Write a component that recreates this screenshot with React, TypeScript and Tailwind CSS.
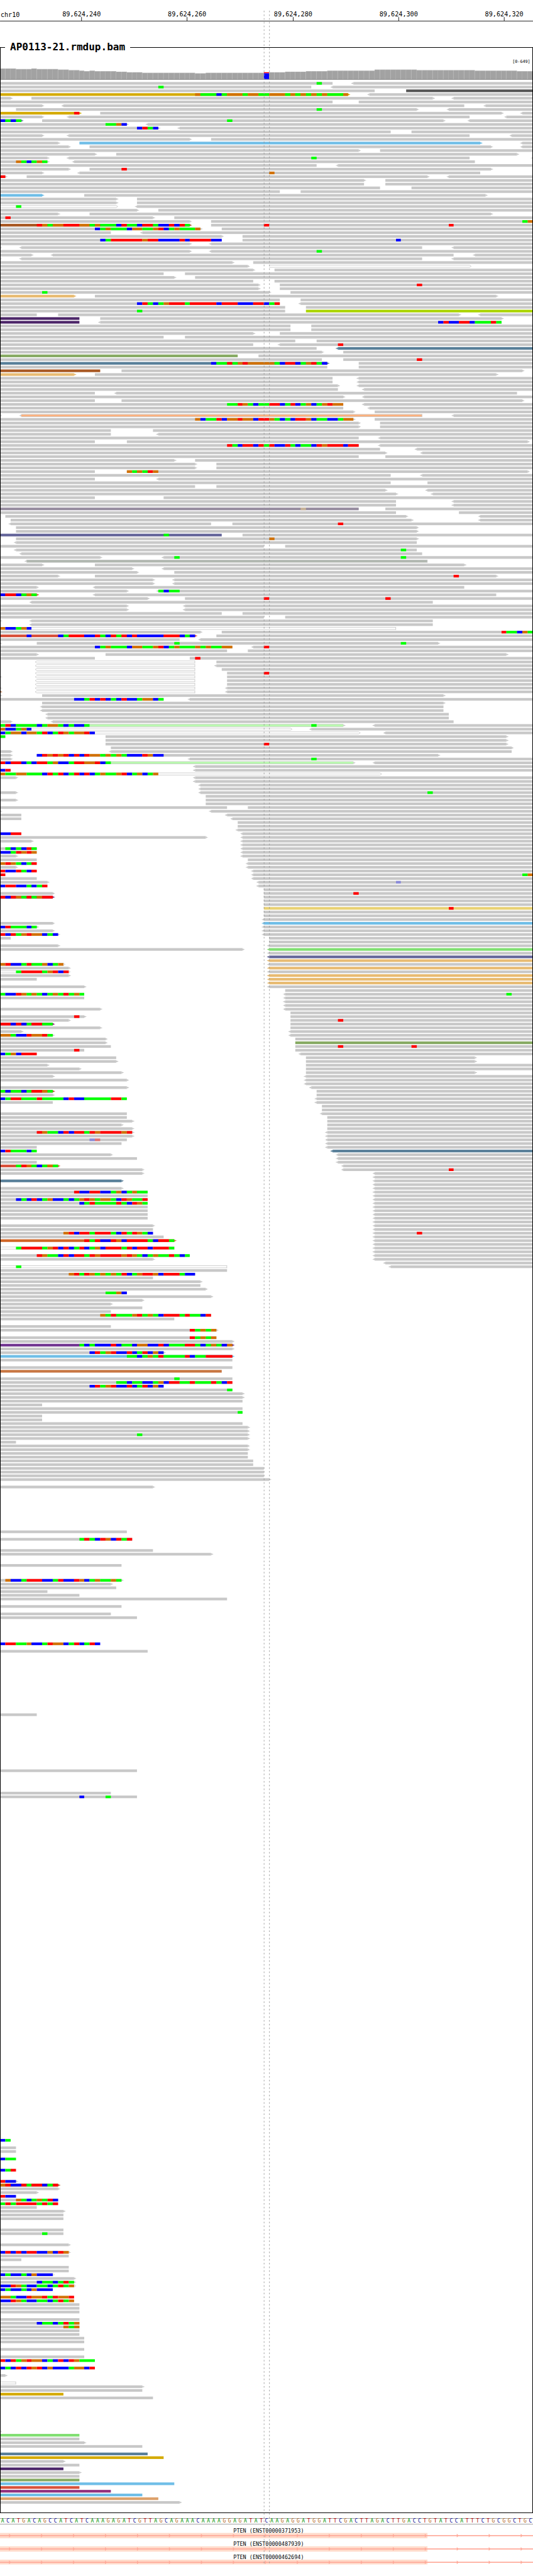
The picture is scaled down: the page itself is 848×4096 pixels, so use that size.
import React from "react";

const BASES = 101;
const WIDTH = 1000;
const ROW = 7;

/* Left edge of a base column, in chart units. */
const edge = (k: number) => Math.round((k * WIDTH) / BASES);

const READ_COLORS: Record<string, string> = {
  "": "#c8c8c8",
  y: "#d4aa00",
  k: "#555555",
  s: "#6fbee7",
  v: "#4b2568",
  l: "#aad400",
  t: "#587f99",
  o: "#87aa63",
  b: "#a85823",
  p: "#e8bb72",
  M: "#978da0",
  V: "#64659a",
  R: "#d8503a",
  Y: "#e9d172",
  G: "#80df71",
  O: "#d16526",
  U: "#733792",
  B: "#c87642",
  m: "#93307d",
  T: "#dda16b",
};

/* Reads drawn with a thin grey outline round a pale fill. */
const OUTLINED: Record<string, string> = {
  w: "#ffffff",
  P: "#ffb07a",
  g: "#adb5ac",
  L: "#b8ffac",
};

const BASE_COLORS: Record<string, string> = {
  A: "#00ff00",
  C: "#0000ff",
  G: "#d17105",
  T: "#ff0000",
  n: "#c8b49a",
  c: "#8b8bd9",
  t: "#e07474",
};

/*
 * One line for each row of the pile-up.
 *   [colour][<]start-end[>]   a read, with its direction
 *   position:bases            mismatches and soft clips
 *   =n                        continue at row n
 */
const PILEUP = `0-63 60:A <67-101
0-59 30:A <63-101
0-71 k77-101
y0-66> 37:GAAACAGGGAGGAAGGGAGAGAGAGAAAG <70-101
0-2> 6-82> <86-101
0-63 68-101
0-8> <12-88 <92-101
3-79> 60:A <85-101
y0-15> 14:T 19-95> <99-101
0-8> <13-89 <96-101
t0-4> 0:CACA 8-84> 43:A <89-101
0-24> 20:AAGC <28-101
0-30> 26:CTAC <34-101
0-74 78-101
0-8> <13-89 <97-101
0-36> 40-101
0-11> s15-91> <99-101
0-13> 17-93> <99-101
0-68> 72-101
0-18> 22-98>
0-9> <13-89 59:A <101-101
0-9> 3:GACAGA <14-90
0-60 <64-101
0-13> 17-93> 23:T
0-8> <15-91 51:G
0-1> 0:T 5-81> <85-101
0-69> 73-101
0-69 73-101
0-72 78-101
0-53 57-101
s0-8> 16-92>
0-22> 26-101
0-22> 26-101
w0-22> 3:A <26-101
0-26> 30-101
0-11> 17-93>
0-29> 1:T 33-101
0-36> 40-101 99:AG
b0-36> 7:TGAGGTTTGGAGAAACTAACTTACCTCTA 40-101 50:T 85:T
0-38> 18:CAGAAACGGAAGTCAGAAAG 42-101
0-21 <27-101
0-42> 46-101
0-42 19:CATTTTTTGTTCCCCTCTTTTCC 46-101 75:C
0-36> <40-101
w0-0> <4-80 <86-101
0-36> <40-101 60:A
0-6> <10-86 <90-101
w0-0> <4-80 <86-101
0-44> 48-101
0-47> w51-89>
0-48> 52-101
0-31 35-101
0-33> 37-101
0-48 52-101
0-49> 53-101 79:T
0-49> 53-101
0-51> 8:A 55-101
p0-14> 18-94>
0-53 57-101
0-53 26:CTACAGTTTATTTTTCTTTCCCTTCAT <57-101
0-54 58-101
0-54 26:A l58-101
0-7 11-87> <91-101
v0-15 19-95>
v0-15 <19-95 83:CTCCTTCAAATA
0-55 59-101
0-55 59-101
0-48> 53-101
0-31 35-101
0-56 60-101
0-48 <53-101 64:T
0-60 t<64-101
0-61> 65-101
o0-45 49-101
0-61 65-101 79:T
t0-62> 40:CAATAGTGGGGGACTTCAGTAC 68-101
0-62 68-101
b0-19 23-99>
p0-14> 18-94>
0-63 <68-101
0-63 <68-101
0-64> <68-101
0-64 <69-101
0-18 <22-98
0-65> <69-101
0-18 23-99>
0-65 43:AATGACAATTCATCAGCAGTGG <69-101
0-65 <70-101
0-67> 71-101
w0-0> P<4-80 <86-101
0-67> 37:GCAATCGGTGGCTTGACACTTGCAACCAGG 71-101
0-68> 72-101
0-68> 72-101
0-21 29-101
0-21 <30-101
0-68 <72-101
0-18 24-100>
0-68 43:TACTTCTATCCTACAACTGTTTCTT <72-101
0-72 <79-101
0-73> <80-101
0-68 73-101
0-33> 37-101
0-37> 41-101
0-37> 41-101
0-18 24-100> 24:GAGATG
0-74 <80-101
0-18 <30-101
0-74 81-101
0-37 41-101
0-73> <81-101
0-75> <82-101
0-18 31-101
0-75 <86-101
0-75 <86-101
M0-68 57:n 73-101
0-75 87-101
1-77> <91-101
2-78> <91-101
<2-40 44-101 64:T
3-79>
3-79>
V0-42 31:A 46-101
3-79> 51:G
<3-79
0-50 54-101
<3-79 76:A
<4-80
0-19> <31-101 33:A 76:A
g<5-81
0-8> 18-88>
0-25> <31-101
0-26> 33-101
0-11> 18-94> 86:T
0-29> <33-101
0-29> <33-101
0-7> <18-88
0-24> <30-101 30:ACAA
R0-7> 0:CTTCAGA <18-94
0-28> 35-101 50:T 73:T
<6-82
0-24> <35-101
0-24> <35-101
0-42 46-101
0-50 54-101
0-0> <6-82
<6-82
w0-75 0:GCCAGC
0-38> 42-101 95:TAACGA
R0-37> 5:C 11:CATTTCCTACTATCTCCCCCTTTCAC 41-101
0-34 <38-101
0-0> 7-83> 33:A 76:A
0-44 18:CAGAAACGGAAGTCAGAAAGAGAAGG <48-101 50:T
0-43 47-101
0-7> 20-96>
0-18 36-101 37:T
w<7-37 41-101
w<7-37 <41-101
w<7-37 42-101
w<7-37 43-101 50:T
0-0> w<7-37 43-101
w<7-37 43-101
w<7-37 43-101
0-0> w<7-37 <43-101
b0-0> w<7-37 <43-101
0-0> 8-84>
0-31 14:CCATCTCACTCCAGGCA <36-101
8-84>
<8-84
<8-84
<9-85
<9-85
0-2> <10-86
L0-65> 0:ATCAAAACAGGACACCA 59:A <71-101
w0-55> 0:GCCAGC <59-101
w0-68> 0:CAGGCGGATCATGAGGTC <73-101
0:A 20-96>
20-96>
20-96> 50:T
21-97>
0-2> <21-97
0-2> 7-83> 7:CTGTGTCTCTGGAGAGACCCTGCC
0-2> <36-101 59:A
L0-67> 0:TCTTCACTTAGCCATTGGTCA <71-101
<37-101
0:CT <37-101
w0-72> 0:GAAGGAAACTATCATCTCAGAAGTCAGCAG
0-3> <37-101
<37-101
<38-101
<38-101
0-3> <38-101 81:A
39-101
0-3> 39-101
39-101
0-43 47-101
0-0> <40-101
0-4 <43-101
0-4 <44-101
45-101
45-101
<45-101
0:CCTT <46-101
0-39> <46-101
0-6> <46-101
<46-101
0-7 1:ACACTA <46-101
0:CCATGTG <46-101
0-3> <46-101
0-7 47-101
0:GTGACAT <47-101
0-3> <47-101
0:TCCTACT <48-101
0:T <48-101 99:AG
0-7 <48-101
0-9> <49-101 75:c
0:CTTCCACAT <49-101
50-101
0-10> 50-101 67:T
m0-10> 0:TCTGATAGTT 50-101
50-101
50-101
Y50-101 85:T
50-101
50-101
<50-101
0-10> s<50-101
0-7> 0:CTAAACA <50-101
0-10> <50-101
0-11> 0:TCTAGTGGCAC <50-101
0-2 51-101
51-101
0-11> <51-101
0-46> G<51-101
<51-101
V<51-101
p<51-101
w0-12> 0:GTCCATAAGCAG <51-101
0-13> p<51-101
w0-13> 3:ATTTTAGTCT <51-101
0-13> p<51-101
0-7 p<51-101
p<51-101
0-16> <51-101
54-101
0-16 0:ACCTGAGACAGATAGA <54-101 96:A
0-16 <54-101
<54-101
<54-101
0-19> <54-101
55-101
0-16> 14:T 55-101
0-13> 55-101 64:T
m0-10> 0:TTCTCATTAA 55-101
0-19> 55-101
0-4> <55-101
0-10> 0:GGACCTGGTA <55-101
0-20> 56-101
0-20> o56-101
0-21 56-101 64:T 78:T
0-16 14:T 56-101
0:CAGCTTT <57-101
0-22 58-90>
0-22> 58-90>
0-9> 58-101
0-15> 58-101
0-23> 58-90>
0-10> <58-101
0-24> <58-101
<58-101
0-24> <59-101
b0-10> 0:ACAACATTGA 60-101
0-10> 60-101
0:CATTAAATAAAACTCCAAAAATTA <60-101
0-10 <60-101
61-101
61-101
0-24 <61-101
0-24 62-101
0-25> 62-101
0-23> 62-101
0-25> 62-101
0-25> 7:TGAACTCTTATGTTTTGT <62-101
0-25> <62-101
0-24 17:ct <62-101
0-23 <62-101
0-7 <62-101
0:CTAAACA t<63-101
0-21> <64-101
0-26 <64-101
0-7 <64-101
R0-11> 3:ATGACAGA <65-101
0-27> <65-101 85:T
0-27> <71-101
<71-101
t0-23> <71-101
<71-101
0-23> <71-101
0-28 14:TCCTTCCAGCAGAA <71-101
0-28 <71-101
0-28 3:CACTCAGCCACAGTGAGGACTGAAT <71-101
0-28 15:CATAAAATACTGA <71-101
0-28 <71-101
0-28 <71-101
0-28 <71-101
0-28 <71-101
<71-101
0-29> <71-101
0-29 <71-101
0-29 12:GTCTTATTTACTATGAC <71-101 79:T
0-31 <71-101
O0-33> 16:TATCCTGCTTTTACTTA <71-101
<71-101
w0-33 3:ATTTTAGTCTCATCAGCTTTATCTTCTTTA <71-101
<71-101
0-36 7:TGAACTCTTATGTTTTGTGACAGAATACA <71-101
0-29> <71-101
<73-101
w0-43 3:A <74-101
0-43
0-37 13:GTATGAGAGATCAGTTGCTTTACC
0-29
0-38>
0-38
0-39>
0-24 20:AAGC
0-40>
0-27>
0-21>
0-27
0-21
0-40 19:GATAAAGTAGACTTTATAACT
0-33
=333
0-21
0-41> 36:TAGAG
=336
0-41 36:TAGAG
0-44>
U0-44> 15:ACACCCTCAACGGCCTCAAATTACAGACG
0-44>
0-31> 17:CTAGTCCTCATCGC
s0-44> 24:AACAGATAAAATCAATTTTT
0-44
=344
0-44
B0-42
=347
0-44 33:A
0-44 22:AACAACCAGCTTAATAAATACT
0-31 17:CTAGTCCTCATCGC
0-44 43:A
0-46>
0-46>
0-46
0-8
0-46
0-46 45:A
0-8
0-8
0-46
0-47>
0-47>
0-47> 26:A
0-47>
0-3
0-47>
0-47>
0-47
0-47
0-48
0-48
0-50
0-50
0-50
0-51>
=376
0-29>
=388
0-24
=390
0-25 15:ATACTGCTAT
=393
0-29
0-40>
=397
0-23
=401
0-23> 1:GCCATTTCCATCCTGCAGAAGA
0-21>
0-22
0-9
0-15
0-43
=408
0-23
=410
0-21
0-26
=418
0:CTTAAGCCATGGCATCATC
=420
0-28
=437
0-7
=452
0-26
=458
0-21
0-26 15:C 20:A
=551
0:CA
=553
0-3
0-3
=556
0:CAA
=559
0:CAT
=562
0-3> 0:TCC
b0-11> 0:GTCCTATTCAT
0-11>
0-7>
0:TCC
0-11 3:GACAGATC
0:ATATTTTATAT
0-7
0-12>
0-12
0-12
=575
0-12
0-12 8:A
=579
0-13>
=581
0-13> 0:CTCTCTTCCGCTG
0-13
0-4
=585
0-13
0-13
w0-10> 0:CACCACGCCC
0-14>
0-14> 7:CAACATA
w0-14> 0:CCTGACCAACATAG
0:CACCACGCCC
=593
0:GGACCTGGTATGGT
0:CCTGACCAACATAG
0-15
0-15
0-15
=599
0-15
0-15 7:CAACATAG
0-15 12:GAG
0-15
0-15
0-16
0-16
=607
0-16
=609
0-16
0:TCTAGTGGCACTCTGAAA
=612
0:CACTCTGTCGCCCAGGCT
=614
0-1>
=616
w0-3
0-27>
0-27
y0-12
0-29
=629
w0-0>
G0-15
0-15
0-16>
0-27
=635
t0-28
y0-31
0-12>
0-15
v0-12
0-15>
0-15
o0-15
s0-33
R0-15
m0-21
s0-27
T0-30
0-34>`;

const SEQUENCE =
  "ACATGACAGCCATCATCAAAGAGATCGTTAGCAGAAACAAAAGGAGATATCAAGAGGATGGATTCGACTTAGACTTGACCTGTATCCATTTCTGCGGCTGC";

const TICKS = [
  { base: 15, label: "89,624,240" },
  { base: 35, label: "89,624,260" },
  { base: 55, label: "89,624,280" },
  { base: 75, label: "89,624,300" },
  { base: 95, label: "89,624,320" },
];

/* [number of bases, column height] */
const COVERAGE: [number, number][] = [
  [3, 20], [3, 19], [1, 20], [4, 19], [2, 18], [2, 17], [1, 16], [1, 15],
  [1, 16], [4, 15], [2, 14], [3, 13], [10, 12], [2, 11], [11, 12], [1, 13],
  [3, 13], [4, 14], [4, 15], [9, 16], [8, 18], [11, 17], [8, 16], [3, 15],
];
const VARIANT_BASE = 50;

const TRANSCRIPTS = [
  "PTEN (ENST00000371953)",
  "PTEN (ENST00000487939)",
  "PTEN (ENST00000462694)",
];

const MONO = "font-['DejaVu_Sans_Mono',monospace]";

function Ruler() {
  return (
    <svg viewBox="0 0 1000 75" className={`block h-auto w-full ${MONO}`} role="img" aria-label="Genome position">
      <text x="1" y="32" fontSize="12">chr10</text>
      {TICKS.map(({ base, label }) => {
        const x = edge(base + 0.5);
        return (
          <g key={label}>
            <text x={x} y="31" fontSize="12" textAnchor="middle">{label}</text>
            <rect x={x - 0.5} y="32" width="1" height="7" />
          </g>
        );
      })}
      <rect x="0" y="39" width="1000" height="1" />
    </svg>
  );
}

function Coverage() {
  const heights = COVERAGE.flatMap(([n, h]) => Array<number>(n).fill(h));
  return (
    <svg viewBox="0 0 1000 49" className={`block h-auto w-full ${MONO}`} role="img" aria-label="Coverage">
      <text x="995" y="17" fontSize="8" textAnchor="end">[0-649]</text>
      {heights.map((h, i) => {
        const x = edge(i);
        const w = edge(i + 1) - x;
        if (i === VARIANT_BASE) {
          return (
            <g key={i}>
              <rect x={x} y={47 - h} width={w} height="2" fill="#ff0000" />
              <rect x={x} y={49 - h} width={w} height={h - 2} fill="#0000ff" />
            </g>
          );
        }
        return (
          <g key={i}>
            <rect x={x} y={47 - h} width={w} height={h} fill="#b0b0b0" />
            <rect x={x} y={48 - h} width={w - 1} height={h - 1} fill="#a2a2a2" />
          </g>
        );
      })}
      <rect x="0" y="47" width="1000" height="1" fill="#707070" />
    </svg>
  );
}

function Read({ spec, y }: { spec: string; y: number }) {
  const m = /^([a-zA-Z]?)(<?)(\d+)-(\d+)(>?)$/.exec(spec);
  if (!m) return null;
  const [, code, left, from, to, right] = m;
  const a = edge(Number(from));
  const b = edge(Number(to));
  const inner = OUTLINED[code];
  const color = inner ? READ_COLORS[""] : READ_COLORS[code];
  const hollow = code === "w";
  const line = { fill: "none", stroke: color, strokeWidth: 1 };
  return (
    <>
      {b > a && <rect x={a} y={y} width={b - a} height="5" fill={inner ?? color} />}
      {inner && b > a && (
        <>
          <path d={`M${a} ${y + 0.5}H${b}M${a} ${y + 4.5}H${b}`} {...line} />
          {!left && a > 0 && code !== "w" && <path d={`M${a + 0.5} ${y}v5`} {...line} />}
          {!right && b < WIDTH && <path d={`M${b - 0.5} ${y}v5`} {...line} />}
        </>
      )}
      {right && !hollow && <path d={`M${b} ${y + 1}h2v1h2v1h-2v1h-2z`} fill={color} />}
      {left && !hollow && <path d={`M${a} ${y + 1}h-2v1h-2v1h2v1h2z`} fill={color} />}
      {right && hollow && <path d={`M${b} ${y + 0.5}l3 2l-3 2`} {...line} />}
      {left && hollow && <path d={`M${a} ${y + 0.5}l-3 2l3 2`} {...line} />}
    </>
  );
}

function Letters({ spec, y }: { spec: string; y: number }) {
  const [pos, letters] = spec.split(":");
  const runs = letters.match(/(.)\1*/g) ?? [];
  let at = Number(pos);
  return (
    <>
      {runs.map((run) => {
        const start = at;
        at += run.length;
        return (
          <rect
            key={start}
            x={edge(start)}
            y={y}
            width={edge(at) - edge(start)}
            height="5"
            fill={BASE_COLORS[run[0]]}
          />
        );
      })}
    </>
  );
}

function parsePileup(text: string) {
  const rows: { row: number; items: string[] }[] = [];
  let row = 0;
  for (const line of text.split("\n")) {
    if (line.startsWith("=")) {
      row = Number(line.slice(1));
    } else {
      rows.push({ row, items: line.split(" ") });
      row += 1;
    }
  }
  return rows;
}

const ROWS = parsePileup(PILEUP);

function Alignments() {
  return (
    <svg viewBox="0 0 1000 4562" className="block h-auto w-full" role="img" aria-label="Aligned reads">
      {ROWS.map(({ row, items }) => {
        const y = 4 + row * ROW;
        return (
          <g key={row}>
            {items.map((item) =>
              item.includes(":") ? (
                <Letters key={item} spec={item} y={y} />
              ) : (
                <Read key={item} spec={item} y={y} />
              ),
            )}
          </g>
        );
      })}
    </svg>
  );
}

const LETTER_CLASS: Record<string, string> = {
  A: "text-[#009000]",
  C: "text-[#000090]",
  G: "text-[#b06010]",
  T: "text-[#a80000]",
};

function ReferenceSequence() {
  return (
    <div className="mt-2 grid grid-cols-[repeat(101,minmax(0,1fr))] border-y border-[#a0a0a0] text-center text-[8px] leading-[8px]">
      {SEQUENCE.split("").map((letter, i) => (
        <span key={i} className={LETTER_CLASS[letter]}>{letter}</span>
      ))}
    </div>
  );
}

function Transcripts() {
  const arrows = Array.from({ length: 17 }, (_, i) => 17 + i * 60);
  return (
    <svg viewBox="0 0 1000 96" className={`block h-auto w-full ${MONO}`} role="img" aria-label="Transcripts">
      {TRANSCRIPTS.map((name, i) => {
        const y = i * 25;
        return (
          <g key={name}>
            <rect x="0" y={y + 16} width="802" height={i === 2 ? 9 : 10} fill="#ffdbcb" />
            <rect x="0" y={y + 20} width="1000" height="2" fill="#ffa898" />
            {arrows.map((x) => (
              <path key={x} d={`M${x} ${y + 17.5}l3.5 3.5l-3.5 3.5z`} fill="#ffa898" />
            ))}
            <text x="504" y={y + 15} fontSize="10" textAnchor="middle">{name}</text>
          </g>
        );
      })}
    </svg>
  );
}

export default function App() {
  return (
    <main className={`relative min-h-screen overflow-hidden bg-white text-black ${MONO}`}>
      <Ruler />
      <section aria-labelledby="track-name">
        <header className="flex h-[22px] items-center">
          <div className="h-[11px] w-2 self-end border-t border-l border-black" />
          <h1 id="track-name" className="px-2 text-[16px] leading-[22px] font-bold">AP0113-21.rmdup.bam</h1>
          <div className="h-[11px] flex-1 self-end border-t border-r border-black" />
        </header>
        <div className="relative after:pointer-events-none after:absolute after:inset-0 after:border-x after:border-b after:border-black">
          <Coverage />
          <Alignments />
        </div>
      </section>
      <ReferenceSequence />
      <Transcripts />
      <svg
        viewBox="0 0 1000 4828"
        preserveAspectRatio="none"
        className="pointer-events-none absolute inset-0 h-full w-full"
        aria-hidden="true"
      >
        <path d="M495.5 20V4804M505.5 20V4804" stroke="#969696" strokeWidth="1" strokeDasharray="3 4" />
      </svg>
    </main>
  );
}
